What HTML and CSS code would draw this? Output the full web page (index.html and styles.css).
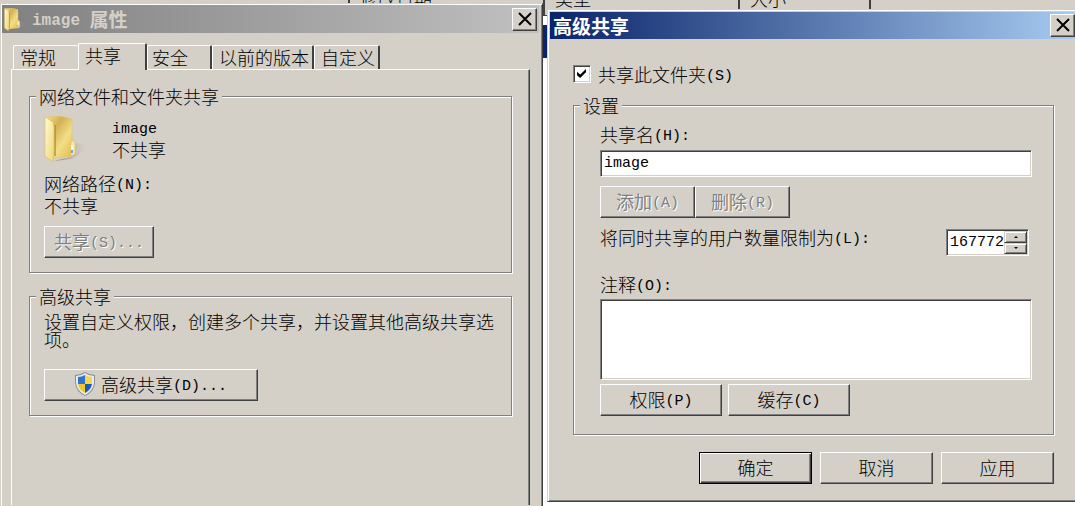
FILE: index.html
```html
<!DOCTYPE html>
<html lang="zh-CN">

<head>
    <meta charset="UTF-8">
    <meta name="viewport" content="width=device-width, initial-scale=1.0">
    <title>image 属性</title>
    <link rel="stylesheet" href="styles.css">
</head>

<body>
    <!-- file list behind the dialogs -->
    <div class="explorer">
        <div class="columns">
            <span class="col col-name"></span>
            <span class="col col-date">修改日期</span>
            <span class="col col-type">类型</span>
            <span class="col col-size">大小</span>
        </div>
        <div class="selected-row"></div>
    </div>

    <main class="desktop">
        <section class="window properties">
            <header class="title-bar inactive">
                <svg class="title-icon" viewBox="0 0 44 46">
                    <use href="#folder" />
                </svg>
                <h1 class="title"><span class="en">image </span>属性</h1>
                <button type="button" class="close" aria-label="关闭">
                    <svg viewBox="0 0 14 14"><path d="M1 1L13 13M13 1L1 13" /></svg>
                </button>
            </header>

            <nav class="tabs">
                <button type="button" class="tab">常规</button>
                <button type="button" class="tab active">共享</button>
                <button type="button" class="tab">安全</button>
                <button type="button" class="tab">以前的版本</button>
                <button type="button" class="tab">自定义</button>
            </nav>

            <div class="panel">
                <fieldset class="group">
                    <legend>网络文件和文件夹共享</legend>
                    <div class="share-info">
                        <svg class="folder" viewBox="0 0 44 46">
                            <defs>
                                <linearGradient id="back" x1="0" y1="0" x2="1" y2="1">
                                    <stop offset="0" stop-color="#f6e08c" />
                                    <stop offset="0.3" stop-color="#d3b053" />
                                    <stop offset="0.6" stop-color="#f3de86" />
                                    <stop offset="1" stop-color="#dcb546" />
                                </linearGradient>
                                <linearGradient id="front" x1="0" y1="0" x2="1" y2="1">
                                    <stop offset="0" stop-color="#fffad2" />
                                    <stop offset="1" stop-color="#efd573" />
                                </linearGradient>
                                <linearGradient id="shade" x1="0" y1="0" x2="1" y2="0">
                                    <stop offset="0" stop-color="#6b6860" stop-opacity="0.8" />
                                    <stop offset="1" stop-color="#b5b1a8" stop-opacity="0" />
                                </linearGradient>
                            </defs>
                            <g id="folder">
                                <path d="M26 41L31 27L43 29Q39 38 27 43L10 45Z" fill="url(#shade)" />
                                <path d="M2 1L16 0L28 3V25L31 27V38L28 40L9 42Z" fill="url(#back)" stroke="#e0c469" stroke-width="0.6" />
                                <path d="M11 9V40" stroke="#b08d32" stroke-width="1.4" />
                                <path d="M1 1L9 6L10 11V35L9 46L1 40Z" fill="url(#front)" stroke="#d9bc5d" stroke-width="0.6" />
                                <path d="M28 24L31 27V38L27 40V27Z" fill="#f7e7a0" stroke="#d9bc5d" stroke-width="0.5" />
                                <path d="M28 29V35" stroke="#fff" stroke-width="1.6" />
                                <path d="M28 34V37" stroke="#4d9be0" stroke-width="1.6" />
                            </g>
                        </svg>
                        <div>
                            <div class="line"><span class="en">image</span></div>
                            <div class="line">不共享</div>
                        </div>
                    </div>
                    <div class="line">网络路径<span class="en">(N):</span></div>
                    <div class="line">不共享</div>
                    <button type="button" class="btn share-btn" disabled>共享<span class="en">(S)...</span></button>
                </fieldset>

                <fieldset class="group advanced">
                    <legend>高级共享</legend>
                    <p class="hint">设置自定义权限，创建多个共享，并设置其他高级共享选项。</p>
                    <button type="button" class="btn advanced-btn">
                        <svg class="shield" viewBox="0 0 20 24">
                            <path d="M10 0Q5 3 0 3V11Q1 20 10 24Q19 20 20 11V3Q15 3 10 0Z" fill="#8b9095" />
                            <path d="M10 1Q6 4 1 4V11Q2 19 10 23Q18 19 19 11V4Q14 4 10 1Z" fill="#e8eaec" />
                            <path d="M10 3Q7 5 3 5V12H10Z" fill="#2f74cc" />
                            <path d="M10 3Q13 5 17 5V12H10Z" fill="#f8d64a" />
                            <path d="M3 12Q4 18 10 21V12Z" fill="#f3c52e" />
                            <path d="M17 12Q16 18 10 21V12Z" fill="#1c5cb8" />
                        </svg>
                        <span>高级共享<span class="en">(D)...</span></span>
                    </button>
                </fieldset>
            </div>
        </section>

        <section class="window sharing">
            <header class="title-bar">
                <h2 class="title">高级共享</h2>
                <button type="button" class="close" aria-label="关闭">
                    <svg viewBox="0 0 14 14"><path d="M1 1L13 13M13 1L1 13" /></svg>
                </button>
            </header>

            <form class="sharing-form">
                <div class="check-row">
                    <input type="checkbox" id="shareFolder" checked>
                    <label for="shareFolder">共享此文件夹<span class="en">(S)</span></label>
                </div>

                <fieldset class="group settings">
                    <legend>设置</legend>
                    <label class="field-label" for="shareName">共享名<span class="en">(H):</span></label>
                    <input type="text" class="text-box" id="shareName" value="image">
                    <div class="name-buttons">
                        <button type="button" class="btn" disabled>添加<span class="en">(A)</span></button>
                        <button type="button" class="btn" disabled>删除<span class="en">(R)</span></button>
                    </div>
                    <div class="limit-row">
                        <label for="userLimit">将同时共享的用户数量限制为<span class="en">(L):</span></label>
                        <div class="spinner">
                            <input type="text" id="userLimit" value="167772">
                            <div class="arrows">
                                <button type="button" class="up" aria-label="增加"></button>
                                <button type="button" class="down" aria-label="减少"></button>
                            </div>
                        </div>
                    </div>
                    <label class="field-label" for="comment">注释<span class="en">(O):</span></label>
                    <textarea class="text-box" id="comment"></textarea>
                    <div class="more-buttons">
                        <button type="button" class="btn">权限<span class="en">(P)</span></button>
                        <button type="button" class="btn">缓存<span class="en">(C)</span></button>
                    </div>
                </fieldset>

                <div class="footer">
                    <button type="submit" class="btn default">确定</button>
                    <button type="button" class="btn">取消</button>
                    <button type="button" class="btn">应用</button>
                </div>
            </form>
        </section>
    </main>
</body>

</html>
```

FILE: styles.css
```css
* {
    box-sizing: border-box;
}

body {
    margin: 0;
    overflow: hidden;
    background-color: #fff;
    color: #000;
    font-family: "Noto Sans CJK SC", sans-serif;
    font-size: 18px;
    font-weight: 300;
    line-height: 22px;
}

button,
input,
textarea {
    font: inherit;
    color: inherit;
    margin: 0;
    border-radius: 0;
}

.en {
    font-family: "Liberation Mono", monospace;
    font-size: 15px;
    line-height: 1;
    vertical-align: 2px;
    white-space: pre;
}

/* Explorer behind */
.explorer {
    position: absolute;
    inset: 0;
    overflow: hidden;
}

.columns {
    display: flex;
    height: 26px;
    margin-top: -10px;
    background-color: #d4d0c8;
    border-bottom: 1px solid #404040;
}

.col {
    padding-left: 10px;
    line-height: 16px;
    border-right: 2px solid #404040;
}

.col-name {
    width: 350px;
}

.col-date,
.col-type {
    width: 195px;
}

.col-size {
    width: 131px;
}

.selected-row {
    height: 33px;
    margin-top: 9px;
    background-color: #0a246a;
}

/* Windows */
.desktop {
    position: relative;
    display: grid;
    grid-template-columns: 543fr 528fr;
    column-gap: 4px;
    align-items: start;
}

.window {
    padding: 1px;
    background-color: #d4d0c8;
    border: 1px solid;
    border-color: #d4d0c8 #404040 #404040 #d4d0c8;
    box-shadow: inset 1px 1px #fff, inset -1px -1px #808080;
}

.properties {
    display: flex;
    flex-direction: column;
    min-height: calc(100vh - 3px);
    margin-top: 3px;
    border-bottom: none;
    box-shadow: inset 1px 1px #fff, inset -1px 0 #808080;
}

.sharing {
    margin-top: 9px;
    padding: 2px 0 2px 2px;
    border-right: none;
    box-shadow: inset 1px 1px #fff, inset 0 -1px #808080;
}

.title-bar {
    display: flex;
    align-items: center;
    height: 27px;
    padding: 0 0 0 3px;
    color: #fff;
    background: linear-gradient(to right, #0a246a, #a6caf0);
}

.title-bar.inactive {
    height: 28px;
    margin-right: 2px;
    padding: 0 2px;
    color: #d4d0c8;
    background: linear-gradient(to right, #808080, #c0c0c0);
}

.title-icon {
    width: 22px;
    height: 23px;
    margin-right: 6px;
}

.title {
    flex: 1;
    margin: 0;
    font-size: 19px;
    font-weight: bold;
    line-height: 22px;
}

.title .en {
    font-size: 16px;
}

.close {
    width: 25px;
    height: 23px;
    padding: 0 0 1px;
    line-height: 0;
    background-color: #d4d0c8;
    border: 1px solid;
    border-color: #fff #404040 #404040 #fff;
    box-shadow: inset -1px -1px #808080;
}

.close svg {
    width: 14px;
    height: 14px;
    stroke: #000;
    stroke-width: 2;
}

/* Tabs */
.tabs {
    display: flex;
    align-items: flex-end;
    height: 36px;
    padding-left: 11px;
}

.tab {
    height: 24px;
    padding: 0 14px 2px 6px;
    line-height: 22px;
    text-align: left;
    color: #000;
    background-color: #d4d0c8;
    border: 1px solid #fff;
    border-bottom: none;
    border-right: 2px solid #404040;
    border-radius: 2px 2px 0 0;
}

.tab:first-child {
    padding-right: 22px;
    border-right: none;
}

.tab.active {
    position: relative;
    height: 27px;
    padding: 0 24px 5px 6px;
    margin-bottom: -1px;
}

.tab:nth-child(3) {
    padding: 0 22px 2px 4px;
}

.tab:nth-child(n + 4) {
    padding-right: 3px;
}

.panel {
    flex: 1;
    margin: 0 11px 0 9px;
    padding: 17px 17px 0 17px;
    border: 1px solid #fff;
    border-right-color: #404040;
    border-bottom: none;
    box-shadow: inset -1px 0 #808080;
}

/* Group boxes */
.group {
    min-width: 0;
    margin: 0;
    padding: 0 14px 14px;
    border: 1px solid #808080;
    box-shadow: 1px 1px #fff, inset 1px 1px #fff;
}

.group legend {
    margin-left: -8px;
    padding: 0 3px;
    line-height: 18px;
    background-color: #d4d0c8;
}

.share-info {
    display: flex;
    gap: 24px;
    margin: 11px 0 10px;
}

.folder {
    width: 44px;
    height: 46px;
}

.advanced {
    margin-top: 14px;
}

.hint {
    margin: 7px 0 21px;
    line-height: 18px;
}

/* Buttons */
.btn {
    height: 32px;
    padding: 0 0 3px;
    background-color: #d4d0c8;
    border: 1px solid;
    border-color: #fff #404040 #404040 #fff;
    box-shadow: inset -1px -1px #808080;
}

.btn:disabled {
    color: #808080;
    font-weight: 400;
    text-shadow: 1px 1px #fff;
}

.btn.default {
    border-color: #000;
    box-shadow: inset 1px 1px #fff, inset -1px -1px #404040, inset -2px -2px #808080;
}

.share-btn {
    display: block;
    width: 110px;
    margin-top: 10px;
}

.advanced-btn {
    display: flex;
    align-items: center;
    justify-content: center;
    gap: 6px;
    width: 214px;
}

.shield {
    width: 20px;
    height: 24px;
}

/* Sharing dialog */
.sharing-form {
    padding: 24px 21px 15px 23px;
}

.check-row {
    display: flex;
    align-items: center;
    gap: 7px;
}

.check-row input {
    appearance: none;
    width: 18px;
    height: 18px;
    background-color: #fff;
    border: 1px solid;
    border-color: #808080 #fff #fff #808080;
    box-shadow: inset 1px 1px #404040, inset -1px -1px #d4d0c8;
}

.check-row input:checked::before {
    content: "";
    display: block;
    width: 9px;
    height: 9px;
    margin: 3px;
    background-color: #000;
    clip-path: polygon(0 30%, 35% 60%, 100% 0, 100% 35%, 35% 100%, 0 70%);
}

.settings {
    margin-top: 11px;
    padding: 0 21px 18px 26px;
}

.settings legend {
    margin-left: -20px;
}

.field-label {
    display: block;
}

.settings legend + .field-label {
    margin-top: 9px;
}

.text-box,
.spinner {
    background-color: #fff;
    border: 1px solid;
    border-color: #808080 #fff #fff #808080;
    box-shadow: inset 1px 1px #404040, inset -1px -1px #d4d0c8;
}

.text-box {
    display: block;
    width: 100%;
    height: 27px;
    margin-top: 5px;
    padding: 0 3px;
    font-family: "Liberation Mono", monospace;
    font-size: 15px;
}

textarea.text-box {
    height: 81px;
    margin-top: 4px;
    resize: none;
}

.name-buttons {
    display: flex;
    margin: 9px 0 11px;
}

.name-buttons .btn {
    width: 95px;
}

.limit-row {
    display: flex;
    justify-content: space-between;
    margin: 0 3px 17px 0;
}

.limit-row label {
    line-height: 16px;
}

.spinner {
    display: flex;
    width: 83px;
    height: 27px;
    padding: 1px;
}

.spinner input {
    flex: 1;
    min-width: 0;
    padding: 0 0 0 2px;
    font-family: "Liberation Mono", monospace;
    font-size: 15px;
    background: none;
    border: none;
}

.arrows {
    display: grid;
    width: 23px;
}

.arrows button {
    display: grid;
    place-items: center;
    padding: 0;
    background-color: #d4d0c8;
    border: 1px solid;
    border-color: #d4d0c8 #404040 #404040 #d4d0c8;
    box-shadow: inset 1px 1px #fff, inset -1px -1px #808080;
}

.arrows button::before {
    content: "";
    border: 2px solid transparent;
}

.arrows .up::before {
    border-top: none;
    border-bottom-color: #000;
}

.arrows .down::before {
    border-bottom: none;
    border-top-color: #000;
}

.more-buttons {
    display: flex;
    gap: 6px;
    margin-top: 4px;
}

.more-buttons .btn {
    width: 122px;
}

.footer {
    display: flex;
    justify-content: flex-end;
    gap: 8px;
    margin-top: 17px;
}

.footer .btn {
    width: 113px;
}
```
